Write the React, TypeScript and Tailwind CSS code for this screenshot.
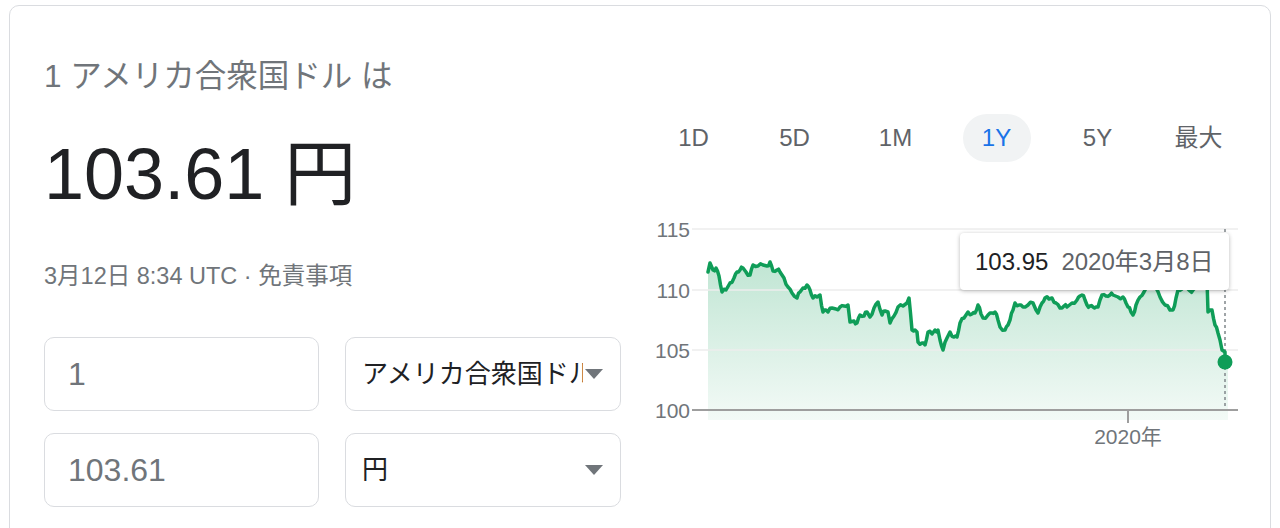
import React from "react";

const pts: [number, number][] = [
  [708,272],[710,263],[713,270],[716,268],[719,276],[722,292],[726,290],[730,283],[734,278],[737,272],[740,270],[743,268],[746,272],[750,275],[753,265],[758,266],[763,265],[767,266],[770,262],[773,271],[777,270],[780,272],[784,278],[788,287],[792,293],[797,298],[800,292],[803,288],[807,285],[810,290],[813,298],[817,297],[820,295],[823,312],[826,310],[828,312],[832,308],[836,309],[840,307],[844,306],[848,305],[850,322],[854,321],[857,323],[860,315],[864,316],[867,312],[870,317],[874,308],[878,302],[882,315],[885,311],[888,312],[890,323],[894,316],[898,307],[903,306],[907,303],[909,298],[912,330],[915,330],[917,332],[918,342],[922,343],[925,345],[928,332],[932,334],[935,330],[938,330],[940,340],[943,350],[947,338],[950,332],[954,337],[957,337],[960,323],[964,318],[968,312],[972,314],[975,313],[978,305],[981,314],[983,318],[988,315],[992,313],[995,312],[998,320],[1000,327],[1005,330],[1008,325],[1010,320],[1013,310],[1015,303],[1019,305],[1023,307],[1028,305],[1033,303],[1036,310],[1038,313],[1042,303],[1045,298],[1049,299],[1052,298],[1056,303],[1060,308],[1064,306],[1067,307],[1072,303],[1077,300],[1080,296],[1082,295],[1085,300],[1087,305],[1090,306],[1093,307],[1096,307],[1098,307],[1100,300],[1102,295],[1106,296],[1110,295],[1113,295],[1118,297],[1123,297],[1126,303],[1128,307],[1131,312],[1133,315],[1136,305],[1140,297],[1144,292],[1148,288],[1152,284],[1156,288],[1160,297],[1165,305],[1170,310],[1173,310],[1176,298],[1178,290],[1182,289],[1187,288],[1190,291],[1193,290],[1197,288],[1200,285],[1204,282],[1207,280],[1208,312],[1212,310],[1215,325],[1218,333],[1220,340],[1222,350],[1225,352],[1225,362],
];

// densify with a small deterministic jitter to mimic daily noise
const dense: [number, number][] = [];
for (let i = 0; i < pts.length - 1; i++) {
  const [x0, y0] = pts[i];
  const [x1, y1] = pts[i + 1];
  dense.push([x0, y0]);
  if (x1 - x0 >= 3 && i < pts.length - 3) {
    const mx = (x0 + x1) / 2;
    const my = (y0 + y1) / 2 + ((i * 37) % 5 - 2) * 0.9;
    dense.push([mx, my]);
  }
}
dense.push(pts[pts.length - 1]);

const linePath = dense.map((p, i) => `${i === 0 ? "M" : "L"}${p[0].toFixed(1)} ${p[1].toFixed(1)}`).join(" ");
const areaPath = `${linePath} L1228 362 L1228 420 L708 420 Z`;

const tabs = ["1D", "5D", "1M", "1Y", "5Y", "最大"];

function Caret() {
  return (
    <svg width="18" height="10" viewBox="0 0 18 10" className="shrink-0">
      <polygon points="0,0 18,0 9,10" fill="#70757a" />
    </svg>
  );
}

function Chart() {
  return (
    <div className="relative h-[260px] w-[607px]">
      <svg width="607" height="260" viewBox="0 0 607 260" className="block">
        <defs>
          <linearGradient id="fillg" x1="0" y1="262" x2="0" y2="420" gradientUnits="userSpaceOnUse">
            <stop offset="0" stopColor="#0f9d58" stopOpacity="0.26" />
            <stop offset="1" stopColor="#0f9d58" stopOpacity="0.05" />
          </linearGradient>
        </defs>
        <g transform="translate(-643 -200)">
          <path d={areaPath} fill="url(#fillg)" />
          {[229, 290, 350].map((y) => (
            <line key={y} x1="692" x2="1238" y1={y} y2={y} stroke="#ececec" strokeWidth="1.5" />
          ))}
          <line x1="1225" x2="1225" y1="229" y2="410" stroke="#80868b" strokeWidth="1.5" strokeDasharray="3 3" />
          <line x1="692" x2="1238" y1="410" y2="410" stroke="#9e9e9e" strokeWidth="2" />
          <line x1="1128" x2="1128" y1="410" y2="423" stroke="#9e9e9e" strokeWidth="2" />
          <path d={linePath} fill="none" stroke="#0f9d58" strokeWidth="3.5" strokeLinejoin="round" strokeLinecap="round" />
          <circle cx="1225" cy="362" r="7.5" fill="#0f9d58" />
          {[
            ["115", 229],
            ["110", 290],
            ["105", 350],
            ["100", 410],
          ].map(([t, y]) => (
            <text key={t as string} x="690" y={(y as number) + 7.5} textAnchor="end" fontSize="21" fill="#70757a">
              {t}
            </text>
          ))}
          <text x="1128" y="444" textAnchor="middle" fontSize="21" fill="#70757a">
            2020年
          </text>
        </g>
      </svg>
      <div className="absolute left-[317px] top-[33px] flex h-[57px] w-[269px] items-center gap-[13px] rounded-[4px] bg-white pl-[15px] text-[24px] leading-[28px] shadow-[0_1px_4px_rgba(0,0,0,0.28)]">
        <span className="text-[#202124]">103.95</span>
        <span className="text-[#5f6368]">2020年3月8日</span>
      </div>
    </div>
  );
}

export default function App() {
  return (
    <div className="min-h-screen bg-white pl-[9px] pt-[5px] font-['Liberation_Sans','Noto_Sans_CJK_JP',sans-serif]">
      <div className="flex w-[1262px] rounded-[10px] border border-[#dadce0] pb-10">
        <div className="ml-[34px] flex w-[577px] flex-col">
          <div className="mt-[52px] h-[36px] whitespace-nowrap text-[31.5px] leading-[36px] text-[#70757a]">
            1 アメリカ合衆国ドル は
          </div>
          <div className="mt-[42px] h-[76px] whitespace-nowrap text-[72px] leading-[76px] text-[#202124]">
            103.61 円
          </div>
          <div className="mt-[50px] h-[28px] whitespace-nowrap text-[23.5px] leading-[28px] text-[#70757a]">
            3月12日 8:34 UTC · 免責事項
          </div>
          <div className="mt-[47px] grid grid-cols-[275px_276px] gap-x-[26px] gap-y-[22px]">
            <div className="flex h-[74px] items-center rounded-[10px] border border-[#dadce0] pl-[23px] text-[32px] leading-[40px] text-[#70757a]">
              1
            </div>
            <div className="flex h-[74px] items-center rounded-[10px] border border-[#dadce0] pl-[16px] pr-[17px]">
              <span className="mr-[2px] flex-1 overflow-hidden whitespace-nowrap text-[26px] leading-[32px] text-[#202124]">
                アメリカ合衆国ドル
              </span>
              <Caret />
            </div>
            <div className="flex h-[74px] items-center rounded-[10px] border border-[#dadce0] pl-[23px] text-[32px] leading-[40px] text-[#70757a]">
              103.61
            </div>
            <div className="flex h-[74px] items-center rounded-[10px] border border-[#dadce0] pl-[16px] pr-[17px]">
              <span className="mr-[2px] flex-1 overflow-hidden whitespace-nowrap text-[26px] leading-[32px] text-[#202124]">
                円
              </span>
              <Caret />
            </div>
          </div>
        </div>
        <div className="ml-[22px] flex w-[607px] flex-col">
          <div className="mt-[108px] flex h-[48px]">
            {tabs.map((t) => (
              <div key={t} className="flex w-[101px] items-center justify-center">
                <div
                  className={
                    t === "1Y"
                      ? "flex h-[48px] w-[68px] items-center justify-center rounded-full bg-[#f1f3f4] text-[24px] text-[#1a73e8]"
                      : "flex h-[48px] w-[68px] items-center justify-center text-[24px] text-[#5f6368]"
                  }
                >
                  {t}
                </div>
              </div>
            ))}
          </div>
          <div className="mt-[38px]">
            <Chart />
          </div>
        </div>
      </div>
    </div>
  );
}
